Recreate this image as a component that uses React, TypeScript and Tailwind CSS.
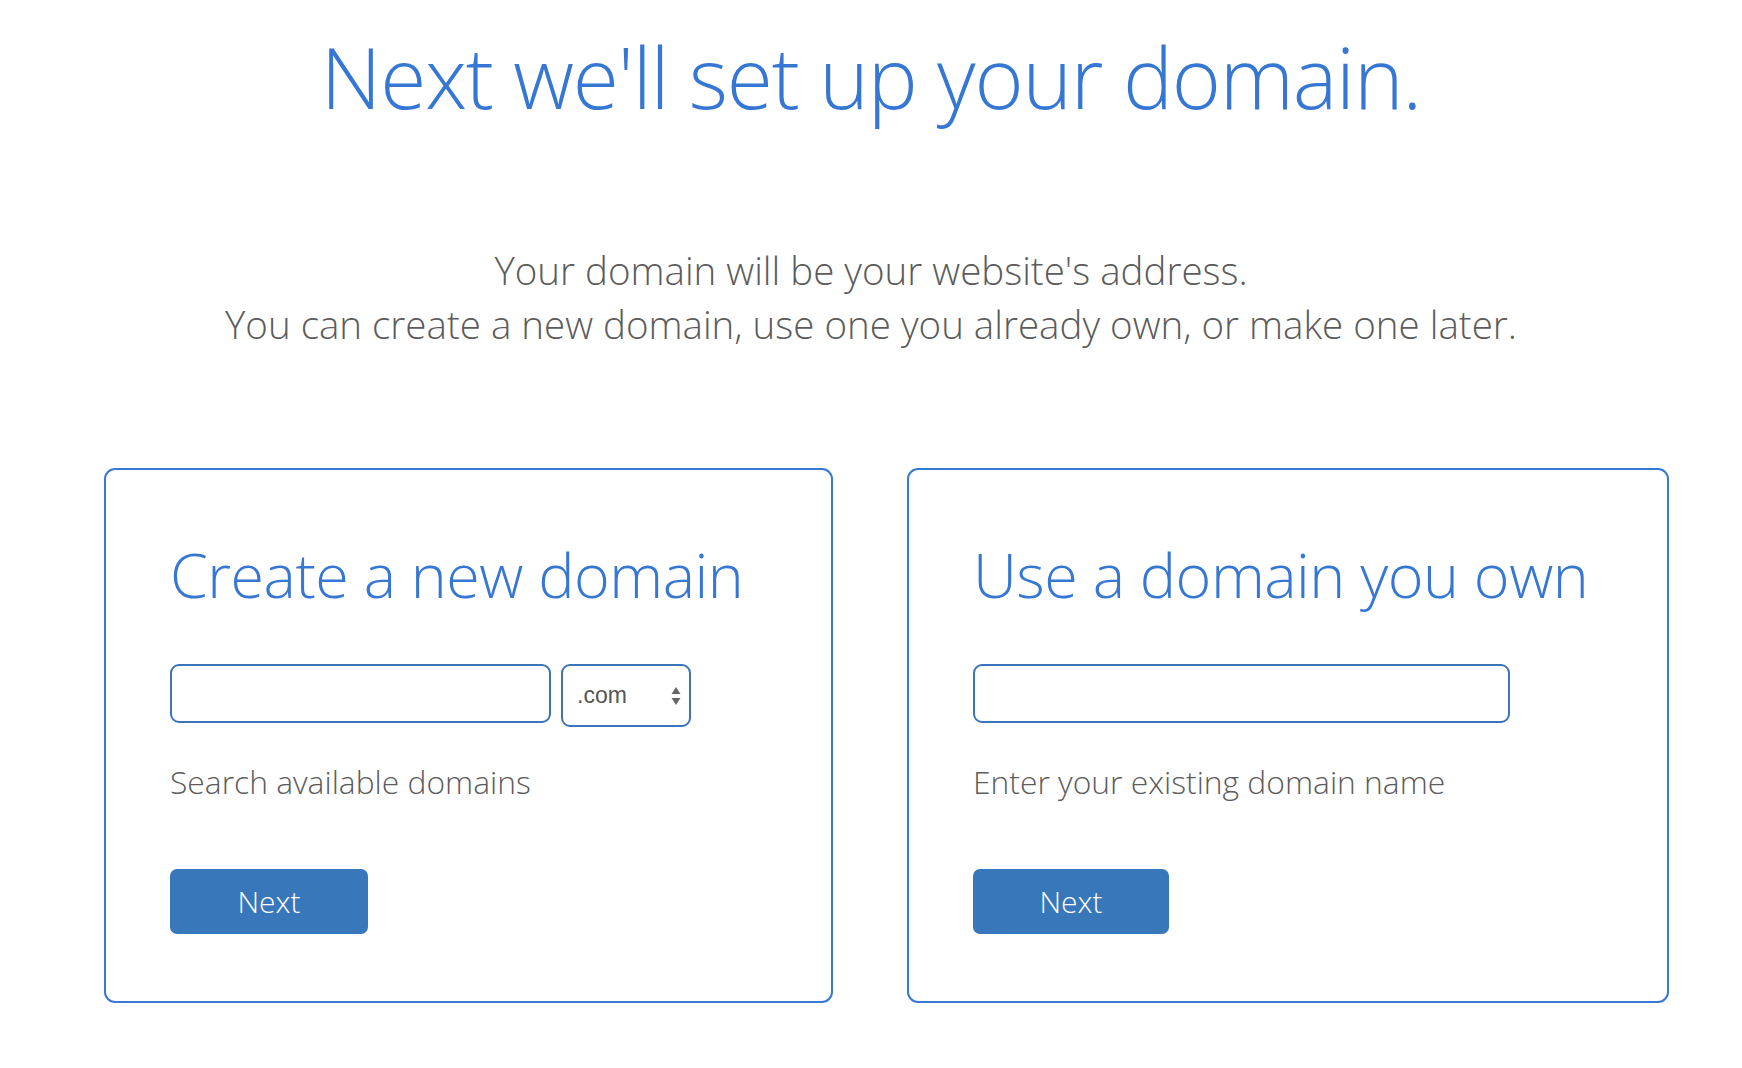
import React from 'react';

const font = { fontFamily: '"Open Sans", "Liberation Sans", sans-serif' };

function SelectArrows() {
  return (
    <svg width="12" height="24" viewBox="0 0 12 24" className="shrink-0">
      <path d="M6 3 L10.5 10 L1.5 10 Z" fill="#666" />
      <path d="M1.5 14 L10.5 14 L6 21 Z" fill="#666" />
    </svg>
  );
}

function DomainCard(props: { title: string; help: string; width: string; buttonWidth: string; children: React.ReactNode }) {
  return (
    <section
      className={`${props.width} rounded-[11px] border-2 border-[#3a78d6] bg-white pl-[64px] pr-6 pt-[74px] pb-[67px]`}
    >
      <h2 className="text-[61px] font-light leading-[61px] text-[#3677d4] tracking-[-0.5px]">{props.title}</h2>
      <div className="mt-[59px] flex h-[63px] items-start gap-[10px]">{props.children}</div>
      <p className="mt-[35px] text-[31.8px] font-light leading-[40px] text-[#5c5c5c]">{props.help}</p>
      <button className={`mt-[67px] h-[65px] ${props.buttonWidth} rounded-[7px] bg-[#3877ba] text-[30px] font-light text-white`}>
        Next
      </button>
    </section>
  );
}

export default function App() {
  return (
    <main className="min-h-[1068px] w-[1742px] bg-white" style={font}>
      <h1 className="pt-[35px] text-center text-[84px] font-light leading-[84px] text-[#3677d4] tracking-[-1.2px]">
        Next we'll set up your domain.
      </h1>
      <div className="mt-[124px] text-center text-[38.5px] font-light leading-[54px] text-[#5c5c5c]">
        <p>Your domain will be your website's address.</p>
        <p>You can create a new domain, use one you already own, or make one later.</p>
      </div>
      <div className="mt-[117px] flex gap-[74px] pl-[104px]">
        <DomainCard title="Create a new domain" help="Search available domains" width="w-[729px]" buttonWidth="w-[198px]">
          <input className="h-[59px] w-[381px] rounded-[9px] border-2 border-[#3a74bb] bg-white outline-none" />
          <div className="flex h-[63px] w-[130px] items-center justify-between rounded-[9px] border-2 border-[#3a74bb] pl-[14px] pr-[7px]">
            <span className="text-[23px] text-[#555]" style={{ fontFamily: '"Liberation Sans", Arial, sans-serif' }}>
              .com
            </span>
            <SelectArrows />
          </div>
        </DomainCard>
        <DomainCard title="Use a domain you own" help="Enter your existing domain name" width="w-[762px]" buttonWidth="w-[196px]">
          <input className="h-[59px] w-[537px] rounded-[9px] border-2 border-[#3a74bb] bg-white outline-none" />
        </DomainCard>
      </div>
    </main>
  );
}
